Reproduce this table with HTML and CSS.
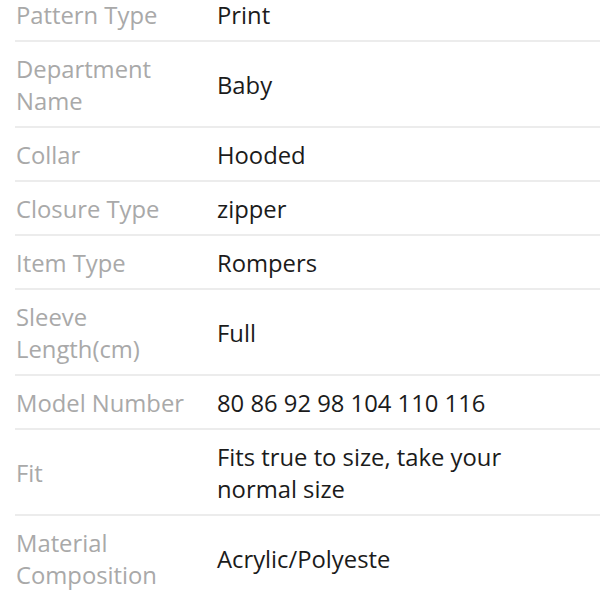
FILE: index.html
```html
<!DOCTYPE html>
<html>
<head>
<meta charset="utf-8">
<link rel="stylesheet" href="styles.css">
</head>
<body>
<div class="specs">
  <div class="row"><div class="label">Pattern Type</div><div class="value">Print</div></div>
  <div class="row"><div class="label">Department<br>Name</div><div class="value">Baby</div></div>
  <div class="row"><div class="label">Collar</div><div class="value">Hooded</div></div>
  <div class="row"><div class="label">Closure Type</div><div class="value">zipper</div></div>
  <div class="row"><div class="label">Item Type</div><div class="value">Rompers</div></div>
  <div class="row"><div class="label">Sleeve<br>Length(cm)</div><div class="value">Full</div></div>
  <div class="row"><div class="label">Model Number</div><div class="value">80 86 92 98 104 110 116</div></div>
  <div class="row"><div class="label">Fit</div><div class="value">Fits true to size, take your<br>normal size</div></div>
  <div class="row"><div class="label">Material<br>Composition</div><div class="value">Acrylic/Polyeste</div></div>
</div>
</body>
</html>
```
FILE: styles.css
```css
html, body {
  margin: 0;
  padding: 0;
  background: #fff;
  overflow: hidden;
}
body {
  font-family: "Open Sans", "Noto Sans", sans-serif;
  font-size: 23.8px;
  line-height: 32px;
}
.specs {
  margin-top: -12px;
  padding-left: 15px;
}
.row {
  display: flex;
  align-items: center;
  padding: 11px 0 9px;
  border-bottom: 2px solid #ececec;
}
.label {
  width: 201px;
  flex: none;
  color: #a9a9a9;
  padding-left: 1px;
}
.value {
  color: #1b1b1b;
}
```
